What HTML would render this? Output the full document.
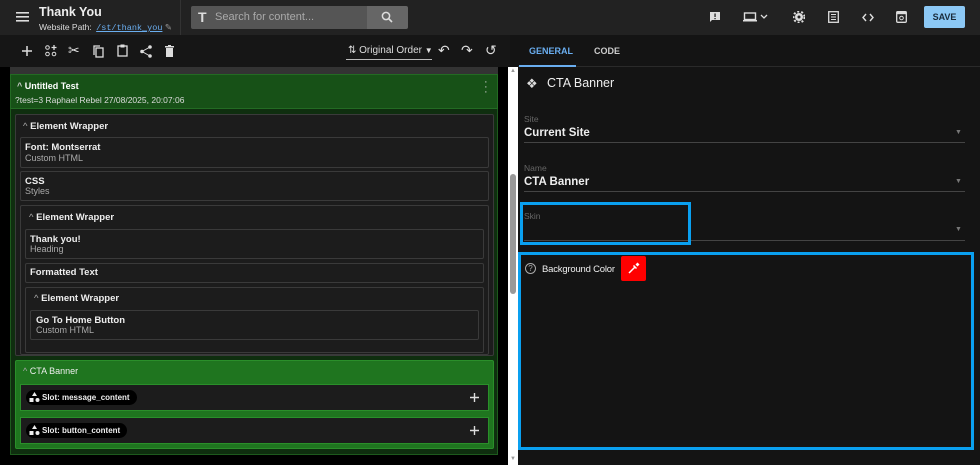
<!DOCTYPE html>
<html><head><style>
*{box-sizing:border-box;margin:0;padding:0}
body{width:980px;height:465px;overflow:hidden;background:#141414;font-family:"Liberation Sans",sans-serif;color:#eee;position:relative;font-size:11px}
.a{position:absolute}
.box{position:absolute;border:1px solid #3a3a3a;background:#1c1c1c;border-radius:2px}
.t{font-weight:bold;font-size:9.5px;color:#eee}
.s{font-size:9px;color:#aaa}
.lbl{font-size:8.5px;color:#666}
.val{font-size:11.5px;font-weight:bold;color:#eee}
</style></head><body>
<div class="a" style="left:0;top:0;width:980px;height:35px;background:#222"></div>
<svg class="a" style="left:16px;top:12px" width="13" height="10"><rect y="0" width="13" height="1.6" fill="#ddd"/><rect y="4" width="13" height="1.6" fill="#ddd"/><rect y="8" width="13" height="1.6" fill="#ddd"/></svg>
<div class="a" style="left:39px;top:5px;font-size:12.5px;font-weight:bold">Thank You</div>
<div class="a" style="left:39px;top:22px;font-size:8.5px;color:#ddd">Website Path: <span style="font-family:'Liberation Mono',monospace;font-size:8.5px;color:#6aaef0;text-decoration:underline;margin-left:2px">/st/thank_you</span> <span style="color:#999">✎</span></div>
<div class="a" style="left:180px;top:0;width:1px;height:35px;background:#333"></div>
<div class="a" style="left:191px;top:6px;width:176px;height:23px;background:#555;border-radius:2px 0 0 2px"></div>
<div class="a" style="left:367px;top:6px;width:41px;height:23px;background:#666;border-radius:0 2px 2px 0"></div>
<div class="a" style="left:198px;top:9px;font-size:14px;font-weight:bold;color:#ddd">T</div>
<div class="a" style="left:215px;top:11px;font-size:11px;color:#aaa">Search for content...</div>
<svg class="a" style="left:381px;top:11px" width="12" height="12"><circle cx="5" cy="5" r="3.6" stroke="#ddd" stroke-width="1.5" fill="none"/><line x1="7.5" y1="7.5" x2="11" y2="11" stroke="#ddd" stroke-width="1.6"/></svg>
<svg class="a" style="left:709px;top:11px" width="12" height="12"><path d="M1 1h10v8H3l-2 2z" fill="#ddd"/><rect x="5.4" y="2.5" width="1.3" height="3.5" fill="#222"/><rect x="5.4" y="7" width="1.3" height="1.2" fill="#222"/></svg>
<svg class="a" style="left:743px;top:12px" width="28" height="10"><rect x="1.5" y="1" width="11" height="6.5" stroke="#ddd" stroke-width="1.4" fill="none"/><rect x="0" y="8" width="14" height="1.5" fill="#ddd"/><path d="M18 3l3 3 3-3" stroke="#ddd" stroke-width="1.3" fill="none"/></svg>
<svg class="a" style="left:793px;top:11px" width="12" height="12"><circle cx="6" cy="6" r="4" fill="#ddd"/><circle cx="6" cy="6" r="5.5" stroke="#ddd" stroke-width="2" stroke-dasharray="2 2" fill="none"/><circle cx="6" cy="6" r="1.5" fill="#222"/></svg>
<svg class="a" style="left:828px;top:11px" width="11" height="12"><rect x="0.7" y="0.7" width="9.6" height="10.6" stroke="#ddd" stroke-width="1.3" fill="none"/><path d="M3 3.5h5M3 6h5M3 8.5h5" stroke="#ddd"/></svg>
<svg class="a" style="left:862px;top:13px" width="12" height="9"><path d="M4 1L1 4.5 4 8M8 1l3 3.5L8 8" stroke="#ddd" stroke-width="1.4" fill="none"/></svg>
<svg class="a" style="left:896px;top:11px" width="11" height="12"><rect x="0.7" y="0.7" width="9.6" height="10.6" rx="1" stroke="#ddd" stroke-width="1.3" fill="none"/><rect x="0.7" y="0.7" width="9.6" height="2.5" fill="#ddd"/><circle cx="5.5" cy="7" r="1.8" stroke="#ddd" fill="none"/></svg>
<div class="a" style="left:924px;top:6px;width:41px;height:22px;background:#8cc8f5;border-radius:2px;color:#1a2a3a;font-size:9px;font-weight:bold;text-align:center;line-height:22px">SAVE</div>
<div class="a" style="left:0;top:35px;width:510px;height:32px;background:#161616"></div>
<svg class="a" style="left:22px;top:46px" width="10" height="10"><path d="M5 0v10M0 5h10" stroke="#ddd" stroke-width="1.5"/></svg>
<svg class="a" style="left:45px;top:45px" width="12" height="12"><circle cx="2.5" cy="2.5" r="1.8" stroke="#ddd" fill="none"/><circle cx="2.5" cy="9" r="1.8" stroke="#ddd" fill="none"/><circle cx="9" cy="9" r="1.8" stroke="#ddd" fill="none"/><path d="M9 0v5M6.5 2.5h5" stroke="#ddd" stroke-width="1.3"/></svg>
<div class="a" style="left:68px;top:42px;font-size:14px;color:#ddd">✂</div>
<svg class="a" style="left:93px;top:45px" width="11" height="13"><rect x="3" y="3" width="7" height="9" stroke="#ddd" stroke-width="1.3" fill="none"/><path d="M1 10V1h6" stroke="#ddd" stroke-width="1.3" fill="none"/></svg>
<svg class="a" style="left:117px;top:44px" width="11" height="13"><rect x="1" y="2" width="9" height="10" stroke="#ddd" stroke-width="1.3" fill="none"/><rect x="3.5" y="0.5" width="4" height="3" fill="#ddd"/></svg>
<svg class="a" style="left:140px;top:45px" width="12" height="13"><circle cx="10" cy="2" r="1.8" fill="#ddd"/><circle cx="2" cy="6.5" r="1.8" fill="#ddd"/><circle cx="10" cy="11" r="1.8" fill="#ddd"/><path d="M10 2L2 6.5 10 11" stroke="#ddd" fill="none"/></svg>
<svg class="a" style="left:165px;top:45px" width="9" height="12"><rect x="0" y="1" width="9" height="1.5" fill="#ddd"/><rect x="3" y="0" width="3" height="1.5" fill="#ddd"/><rect x="1" y="3" width="7" height="9" fill="#ddd"/></svg>
<div class="a" style="left:348px;top:45px;font-size:10px;color:#ddd">⇅ Original Order <span style="font-size:8px">▼</span></div>
<div class="a" style="left:346px;top:59px;width:86px;height:1px;background:#bbb"></div>
<div class="a" style="left:438px;top:42px;font-size:14px;color:#ddd">↶</div>
<div class="a" style="left:461px;top:42px;font-size:14px;color:#ddd">↷</div>
<div class="a" style="left:485px;top:42px;font-size:14px;color:#ddd">↺</div>
<div class="a" style="left:0;top:67px;width:508px;height:398px;background:#000"></div>
<div class="a" style="left:10px;top:67px;width:488px;height:8px;background:#333"></div>
<div class="a" style="left:10px;top:74px;width:488px;height:381px;background:#0f2e0f;border:1px solid #1d5a1d"></div>
<div class="a" style="left:10px;top:74px;width:488px;height:35px;background:#175117;border:1px solid #236b23"></div>
<div class="a" style="left:17px;top:81px;font-size:9px;font-weight:bold;color:#fff"><span style="color:#ccc">^</span> Untitled Test</div>
<div class="a" style="left:15px;top:95px;font-size:8.5px;color:#ddd">?test=3 Raphael Rebel 27/08/2025, 20:07:06</div>
<div class="a" style="left:484px;top:80px;font-size:11px;color:#ccc;line-height:5px">·<br>·<br>·</div>
<div class="box" style="left:15px;top:114px;width:479px;height:242px"></div>
<div class="a t" style="left:23px;top:121px"><span style="color:#aaa;font-weight:normal">^</span> Element Wrapper</div>
<div class="box" style="left:20px;top:137px;width:469px;height:31px"></div>
<div class="a t" style="left:25px;top:142px">Font: Montserrat</div>
<div class="a s" style="left:25px;top:153px">Custom HTML</div>
<div class="box" style="left:20px;top:171px;width:469px;height:30px"></div>
<div class="a t" style="left:25px;top:176px">CSS</div>
<div class="a s" style="left:25px;top:186px">Styles</div>
<div class="box" style="left:20px;top:205px;width:469px;height:150px"></div>
<div class="a t" style="left:29px;top:212px"><span style="color:#aaa;font-weight:normal">^</span> Element Wrapper</div>
<div class="box" style="left:25px;top:229px;width:459px;height:30px"></div>
<div class="a t" style="left:30px;top:234px">Thank you!</div>
<div class="a s" style="left:30px;top:244px">Heading</div>
<div class="box" style="left:25px;top:263px;width:459px;height:20px"></div>
<div class="a t" style="left:30px;top:267px">Formatted Text</div>
<div class="box" style="left:25px;top:287px;width:459px;height:66px"></div>
<div class="a t" style="left:34px;top:293px"><span style="color:#aaa;font-weight:normal">^</span> Element Wrapper</div>
<div class="box" style="left:30px;top:310px;width:449px;height:30px"></div>
<div class="a t" style="left:36px;top:315px">Go To Home Button</div>
<div class="a s" style="left:36px;top:325px">Custom HTML</div>
<div class="a" style="left:15px;top:360px;width:479px;height:89px;background:#1f751f;border:1px solid #2a8f2a;border-radius:2px"></div>
<div class="a" style="left:23px;top:366px;font-size:9px;color:#eee"><span style="color:#aaa">^</span> CTA Banner</div>
<div class="a" style="left:20px;top:384px;width:469px;height:27px;background:#1c1c1c;border:1px solid #2a8f2a"></div>
<div class="a" style="left:20px;top:417px;width:469px;height:27px;background:#1c1c1c;border:1px solid #2a8f2a"></div>
<div class="a" style="left:26px;top:390px;height:15px;padding:0 7px 0 16px;background:#000;border-radius:8px;font-size:8px;font-weight:bold;line-height:15px;color:#eee">Slot: message_content</div>
<div class="a" style="left:26px;top:423px;height:15px;padding:0 7px 0 16px;background:#000;border-radius:8px;font-size:8px;font-weight:bold;line-height:15px;color:#eee">Slot: button_content</div>
<svg class="a" style="left:29px;top:392px" width="11" height="11"><path d="M5.5 0L8 4H3z" fill="#eee"/><rect x="0.5" y="6" width="4" height="4" fill="#eee"/><circle cx="8.5" cy="8" r="2" fill="#eee"/></svg>
<svg class="a" style="left:29px;top:425px" width="11" height="11"><path d="M5.5 0L8 4H3z" fill="#eee"/><rect x="0.5" y="6" width="4" height="4" fill="#eee"/><circle cx="8.5" cy="8" r="2" fill="#eee"/></svg>
<svg class="a" style="left:470px;top:393px" width="9" height="9"><path d="M4.5 0v9M0 4.5h9" stroke="#ddd" stroke-width="1.4"/></svg>
<svg class="a" style="left:470px;top:426px" width="9" height="9"><path d="M4.5 0v9M0 4.5h9" stroke="#ddd" stroke-width="1.4"/></svg>
<div class="a" style="left:508px;top:67px;width:10px;height:398px;background:#fff"></div>
<div class="a" style="left:510px;top:174px;width:6px;height:120px;background:#999;border-radius:3px"></div>
<div class="a" style="left:510px;top:68px;font-size:6px;color:#999">▲</div>
<div class="a" style="left:510px;top:456px;font-size:6px;color:#999">▼</div>
<div class="a" style="left:518px;top:35px;width:462px;height:430px;background:#141414"></div>
<div class="a" style="left:518px;top:66px;width:462px;height:1px;background:#2a2a2a"></div>
<div class="a" style="left:529px;top:46px;font-size:9px;font-weight:bold;color:#6aaef0">GENERAL</div>
<div class="a" style="left:519px;top:65px;width:57px;height:2px;background:#6aaef0"></div>
<div class="a" style="left:594px;top:46px;font-size:9px;font-weight:bold;color:#ccc">CODE</div>
<div class="a" style="left:526px;top:76px;font-size:13px;color:#ddd">❖</div>
<div class="a" style="left:547px;top:76px;font-size:12.5px;color:#eee">CTA Banner</div>
<div class="a lbl" style="left:524px;top:114px">Site</div>
<div class="a val" style="left:524px;top:127px">Current Site</div>
<div class="a" style="left:524px;top:142px;width:441px;height:1px;background:#444"></div>
<div class="a" style="left:955px;top:129px;font-size:7px;color:#777">▼</div>
<div class="a lbl" style="left:524px;top:163px">Name</div>
<div class="a val" style="left:524px;top:176px">CTA Banner</div>
<div class="a" style="left:524px;top:191px;width:441px;height:1px;background:#444"></div>
<div class="a" style="left:955px;top:178px;font-size:7px;color:#777">▼</div>
<div class="a lbl" style="left:524px;top:211px">Skin</div>
<div class="a" style="left:524px;top:240px;width:441px;height:1px;background:#444"></div>
<div class="a" style="left:955px;top:226px;font-size:7px;color:#777">▼</div>
<div class="a" style="left:520px;top:202px;width:171px;height:43px;border:3px solid #0aa0f0"></div>
<div class="a" style="left:518px;top:252px;width:456px;height:198px;border:3px solid #0aa0f0"></div>
<div class="a" style="left:525px;top:263px;width:11px;height:11px;border:1px solid #aaa;border-radius:50%;font-size:8px;color:#aaa;text-align:center;line-height:10px">?</div>
<div class="a" style="left:542px;top:264px;font-size:9.5px;color:#eee;letter-spacing:-0.2px">Background Color</div>
<div class="a" style="left:621px;top:256px;width:25px;height:25px;background:#f00;border-radius:2px"></div>
<svg class="a" style="left:627px;top:262px" width="13" height="13"><path d="M2 11L8 5M6.5 3.5l3 3" stroke="#fff" stroke-width="1.5"/><path d="M8.5 2.5l2-2 2 2-2 2z" fill="#fff"/></svg>
</body></html>
